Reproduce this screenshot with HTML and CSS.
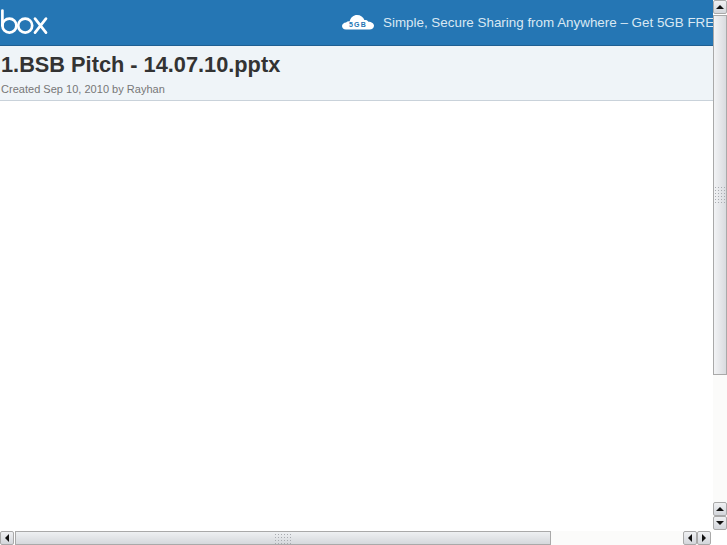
FILE: index.html
```html
<!DOCTYPE html>
<html lang="en">
<head>
    <meta charset="UTF-8">
    <meta name="viewport" content="width=device-width, initial-scale=1.0">
    <title>1.BSB Pitch - 14.07.10.pptx</title>
    <link rel="stylesheet" href="styles.css">
</head>
<body>
    <div class="window">
        <main class="page">
            <header class="banner">
                <svg class="logo" width="48" height="26" viewBox="0 0 48 26" role="img" aria-label="box">
                    <g fill="none" stroke="#fff" stroke-width="2.7" stroke-linecap="round">
                        <path d="M2.4 1.6V16.5"/>
                        <circle cx="9.4" cy="16.6" r="7"/>
                        <circle cx="25.2" cy="16.6" r="7"/>
                        <path d="M35 9.6L46 23.6M46 9.6L35 23.6"/>
                    </g>
                </svg>
                <div class="promo">
                    <svg class="cloud" width="32" height="16" viewBox="0 0 32 16">
                        <path fill="#fff" d="M4 15.5C1.5 15.5 0 13.8 0 12C0 10 1.8 8.6 4 8.4C5 7.6 6.4 7.2 7.6 7.4C8.6 3.4 11.6 1 15 1C18.6 1 21.4 3 22.4 6C24 5.6 25.6 6.2 26.4 7.8C29.6 7.8 32 9.6 32 11.8C32 14 30 15.5 27.6 15.5Z"/>
                        <text x="16" y="13.4" class="cloud-label">5GB</text>
                    </svg>
                    <span class="promo-text">Simple, Secure Sharing from Anywhere – Get 5GB FREE</span>
                </div>
            </header>
            <section class="file-head">
                <h1>1.BSB Pitch - 14.07.10.pptx</h1>
                <p>Created Sep 10, 2010 by Rayhan</p>
            </section>
        </main>

        <div class="scrollbar vertical">
            <div class="btn"><span class="arrow up"></span></div>
            <div class="thumb thumb-v"><span class="grip grip-v"></span></div>
            <div class="track"></div>
            <div class="btn"><span class="arrow up"></span></div>
            <div class="btn"><span class="arrow down"></span></div>
        </div>

        <div class="scrollbar horizontal">
            <div class="btn"><span class="arrow left"></span></div>
            <div class="thumb thumb-h"><span class="grip grip-h"></span></div>
            <div class="track"></div>
            <div class="btn"><span class="arrow left"></span></div>
            <div class="btn"><span class="arrow right"></span></div>
        </div>
    </div>
</body>
</html>
```

FILE: styles.css
```css
html, body {
    margin: 0;
    height: 100%;
    overflow: hidden;
    background: #fff;
}
.window {
    display: grid;
    grid-template-columns: 713px 14px;
    grid-template-rows: 531px 14px;
    width: 727px;
    height: 545px;
}
.page {
    overflow: hidden;
    font-family: "Liberation Sans", Arial, sans-serif;
}
.banner {
    display: flex;
    align-items: flex-start;
    justify-content: space-between;
    height: 45px;
    background: #2576b4;
    border-bottom: 1px solid #1f5f92;
}
.logo {
    flex: none;
    margin: 9px 0 0 0;
}
.promo {
    flex: none;
    display: flex;
    align-items: center;
    gap: 9px;
    width: 371px;
    height: 45px;
    white-space: nowrap;
    overflow: hidden;
}
.cloud {
    flex: none;
    margin-top: -1px;
}
.cloud-label {
    font: bold 7px "Liberation Sans", Arial, sans-serif;
    letter-spacing: 1.2px;
    text-anchor: middle;
    fill: #2576b4;
}
.promo-text {
    font-size: 13.4px;
    color: #d9e8f3;
}
.file-head {
    height: 54px;
    background: #eff4f8;
    border-bottom: 1px solid #c9d2da;
    color: #333;
}
.file-head h1 {
    margin: 0;
    padding: 6px 0 0 1px;
    font-size: 21.75px;
    line-height: 26px;
    font-weight: bold;
}
.file-head p {
    margin: 4px 0 0 1px;
    font-size: 11px;
    line-height: 14px;
    letter-spacing: 0.02px;
    color: #777;
}

/* scrollbars */
.scrollbar {
    display: flex;
    box-sizing: border-box;
}
.vertical {
    flex-direction: column;
    height: 530px;
}
.horizontal {
    width: 711px;
}
.track {
    flex: 1;
    background-color: #fbfbfa;
    background-image: radial-gradient(#f1f0ee 0.6px, transparent 0.7px);
    background-size: 2px 2px;
}
.btn {
    flex: none;
    display: flex;
    align-items: center;
    justify-content: center;
    box-sizing: border-box;
    width: 14px;
    height: 14px;
    background: linear-gradient(#f0f1f3, #d3d6db);
    border: 1px solid #a9a9a9;
    border-radius: 2px;
}
.arrow {
    width: 0;
    height: 0;
    border: 4px solid transparent;
}
.up {
    border-top: 0;
    border-bottom: 4px solid #111;
}
.down {
    border-bottom: 0;
    border-top: 4px solid #111;
}
.left {
    border-left: 0;
    border-right: 4px solid #111;
}
.right {
    border-right: 0;
    border-left: 4px solid #111;
}
.thumb {
    flex: none;
    display: flex;
    align-items: center;
    justify-content: center;
    box-sizing: border-box;
    border: 1px solid #a9a9a9;
}
.thumb-v {
    height: 360px;
    margin-top: 1px;
    background: linear-gradient(90deg, #f2f3f5, #d9dbdf);
}
.thumb-h {
    width: 536px;
    margin-left: 1px;
    background: linear-gradient(#eef0f2, #d5d8dc);
}
.grip {
    background-image: radial-gradient(#a8abb0 0.8px, transparent 1px);
    background-size: 3px 3px;
}
.grip-v {
    width: 12px;
    height: 18px;
}
.grip-h {
    width: 18px;
    height: 11px;
}
```
